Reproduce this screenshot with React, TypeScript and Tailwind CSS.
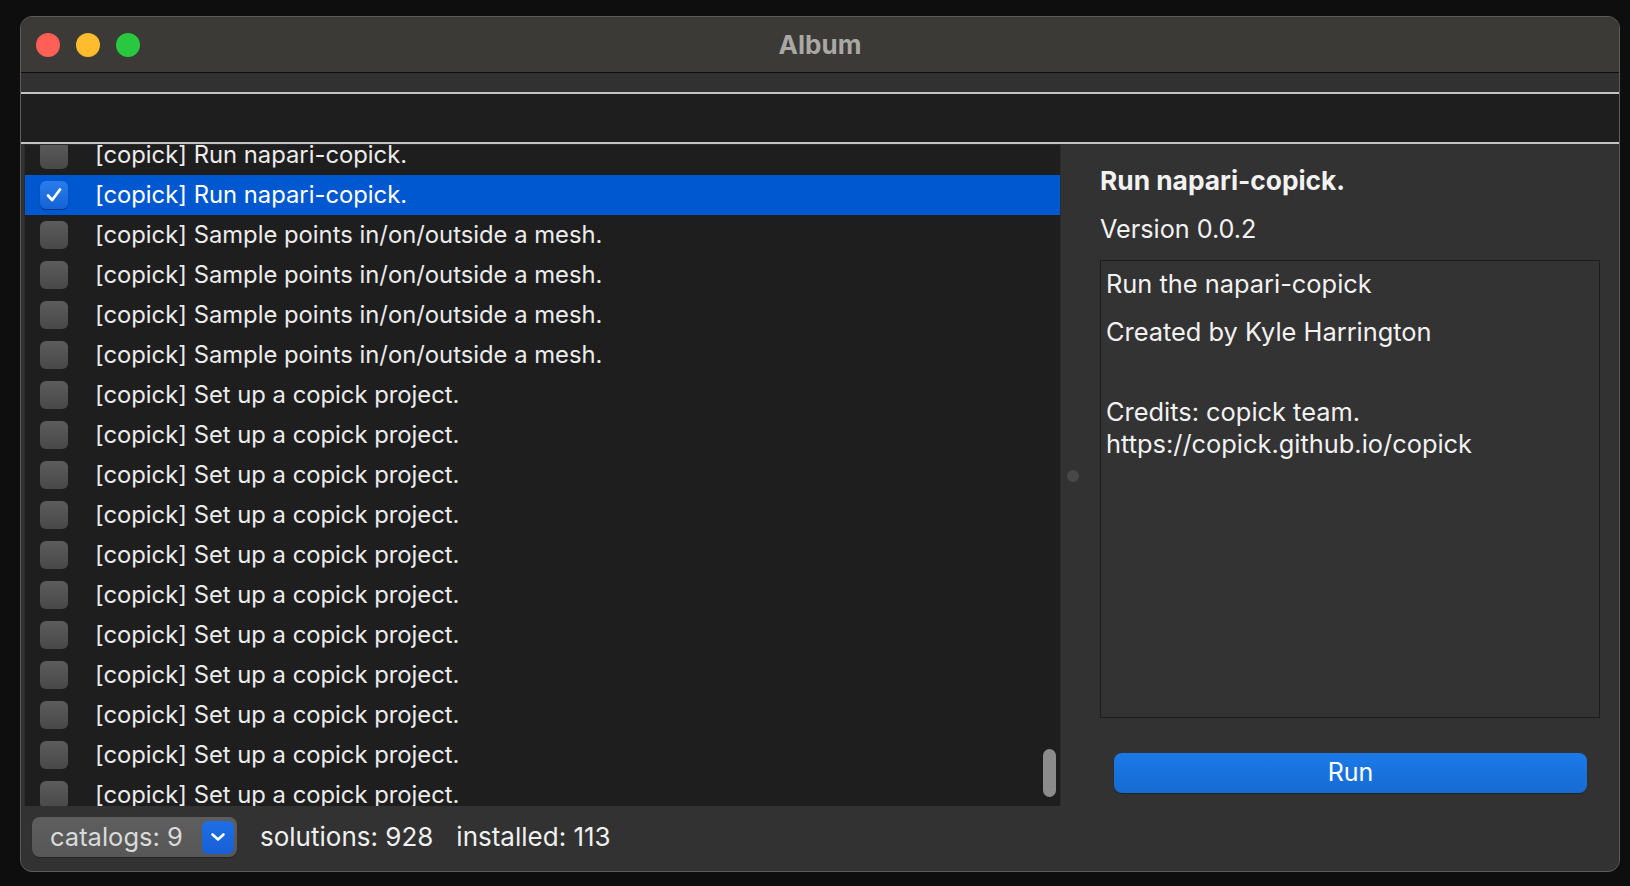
import React from "react";

const rows: string[] = [
  "Run napari-copick.",
  "Run napari-copick.",
  "Sample points in/on/outside a mesh.",
  "Sample points in/on/outside a mesh.",
  "Sample points in/on/outside a mesh.",
  "Sample points in/on/outside a mesh.",
  ...Array(11).fill("Set up a copick project."),
];

function Checkbox({ checked }: { checked: boolean }) {
  if (checked) {
    return (
      <div className="w-[28px] h-[28px] shrink-0 rounded-[6px] bg-gradient-to-b from-[#2a7cec] to-[#1463d6] shadow-[0_1px_1px_rgba(0,0,0,0.4)] flex items-center justify-center">
        <svg width="20" height="20" viewBox="0 0 20 20" fill="none">
          <path d="M4 10.5 L8.2 15 L16 4.5" stroke="white" strokeWidth="2.8" strokeLinecap="round" strokeLinejoin="round" />
        </svg>
      </div>
    );
  }
  return <div className="w-[28px] h-[28px] shrink-0 rounded-[6px] bg-gradient-to-b from-[#5c5c5c] to-[#484848]" />;
}

export default function App() {
  return (
    <div
      className="w-[1630px] h-[886px] bg-[#0e0e0e] pt-[16px] pl-[20px] overflow-hidden"
      style={{ fontFamily: "Inter, 'Noto Sans', sans-serif" }}
    >
      <div className="w-[1600px] h-[856px] rounded-[12px] border border-[#5c5c5c] bg-[#323232] overflow-hidden flex flex-col">
        {/* title bar */}
        <div className="h-[56px] shrink-0 bg-[#3b3a36] border-b border-[#0f0f0f] relative flex items-center pl-[15px] gap-[16px]">
          <span className="w-[24px] h-[24px] rounded-full bg-[#fe5f57]" />
          <span className="w-[24px] h-[24px] rounded-full bg-[#febc2e]" />
          <span className="w-[24px] h-[24px] rounded-full bg-[#28c840]" />
          <div className="absolute inset-0 flex items-center justify-center text-[26px] font-bold text-[#a9a8a4] pointer-events-none">
            Album
          </div>
        </div>
        <div className="h-[19px] shrink-0 bg-[#313131]" />
        <div className="h-[2px] shrink-0 bg-[#c4c4c4]" />
        <div className="h-[48px] shrink-0 bg-[#1e1e1e]" />
        <div className="h-[2px] shrink-0 bg-[#c4c4c4]" />

        {/* main */}
        <div className="flex-1 min-h-0 flex">
          <div className="ml-[3px] w-[1037px] bg-[#1e1e1e] border-t border-l border-r border-[#2b2b2b] overflow-hidden relative">
            <div className="-mt-[10px]">
              {rows.map((r, i) => {
                const sel = i === 1;
                return (
                  <div
                    key={i}
                    className={`h-[40px] flex items-center pl-[15px] gap-[27px] text-[23.8px] ${
                      sel ? "bg-[#0058d0] text-white" : "text-[#ececec]"
                    }`}
                  >
                    <Checkbox checked={sel} />
                    <span className="whitespace-nowrap">[copick] {r}</span>
                  </div>
                );
              })}
            </div>
            <div className="absolute right-[4px] bottom-[9px] w-[13px] h-[48px] rounded-full bg-[#8c8c8c]" />
          </div>

          {/* splitter handle */}
          <div className="w-[24px] shrink-0 flex items-center justify-center pt-[2px]">
            <span className="w-[12px] h-[12px] rounded-full bg-[#484848]" />
          </div>

          {/* details */}
          <div className="flex-1 flex flex-col pl-[15px] pr-[19px] pt-[21px] text-[#f2f2f2]">
            <div className="text-[26.3px] font-bold leading-[32px]">Run napari-copick.</div>
            <div className="text-[25.2px] leading-[32px] mt-[16px]">Version 0.0.2</div>
            <div className="mt-[15px] h-[458px] border border-[#1c1c1c] bg-[#333333] pl-[5px] pt-[7px] text-[25.4px] leading-[32px]">
              <div>Run the napari-copick</div>
              <div className="mt-[16px]">Created by Kyle Harrington</div>
              <div className="mt-[48px]">
                Credits: copick team.
                <br />
                https://copick.github.io/copick
              </div>
            </div>
            <button className="mt-[35px] ml-[14px] mr-[13px] h-[40px] rounded-[8px] bg-gradient-to-b from-[#1b7ae8] to-[#166bd2] text-white text-[25px] shadow-[0_1px_1px_rgba(0,0,0,0.35)]">
              Run
            </button>
          </div>
        </div>

        {/* bottom bar */}
        <div className="h-[65px] shrink-0 flex items-start pt-[11px] pl-[11px] text-[26px] text-[#f0f0f0]">
          <div className="w-[205px] h-[40px] rounded-[8px] bg-gradient-to-b from-[#5e5e5e] to-[#575757] flex items-center pl-[18px] pr-[3px] shadow-[0_1px_1px_rgba(0,0,0,0.3)]">
            <span className="text-[#dadada] text-[25.5px]">catalogs: 9</span>
            <div className="ml-auto w-[32px] h-[33px] rounded-[6px] bg-gradient-to-b from-[#1e6ee6] to-[#185fd4] flex items-center justify-center">
              <svg width="18" height="18" viewBox="0 0 18 18" fill="none">
                <path d="M3.5 6.5 L9 11.5 L14.5 6.5" stroke="white" strokeWidth="2.6" strokeLinecap="round" strokeLinejoin="round" />
              </svg>
            </div>
          </div>
          <span className="ml-[23px] leading-[40px]">solutions: 928</span>
          <span className="ml-[23px] leading-[40px]">installed: 113</span>
        </div>
      </div>
    </div>
  );
}
